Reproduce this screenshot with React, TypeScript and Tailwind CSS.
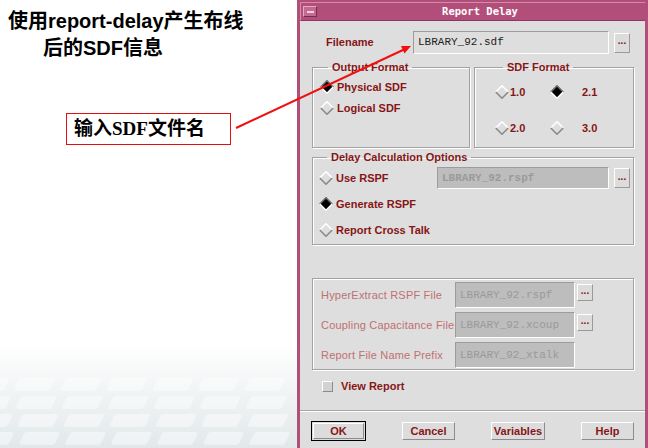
const RED = "text-[#861616]";
const DIM = "text-[#c07070]";

function Radio({ on }: { on?: boolean }) {
  return (
    <svg width="14" height="14" viewBox="0 0 14 14" className="shrink-0">
      <polygon points="7,0.5 13.5,7 7,13.5 0.5,7" fill={on ? "#000000" : "#dedede"} />
      <polyline points="0.8,7 7,0.8 13.2,7" fill="none" stroke={on ? "#707070" : "#ffffff"} strokeWidth="1.6" />
      <polyline points="0.8,7 7,13.2 13.2,7" fill="none" stroke={on ? "#ffffff" : "#8a8a8a"} strokeWidth="1.6" />
    </svg>
  );
}

function Dots({ h = "h-[20px]" }: { h?: string }) {
  return (
    <div
      className={`w-[16px] ${h} shrink-0 flex items-center justify-center bg-[#dcdcdc] border border-t-white border-l-white border-r-[#9a9a9a] border-b-[#9a9a9a] text-[10px] font-bold leading-none ${RED}`}
    >
      <span className="-mt-[3px]">...</span>
    </div>
  );
}

function Field({ text, disabled, w, h }: { text: string; disabled?: boolean; w: string; h: string }) {
  return (
    <div
      className={`${w} ${h} shrink-0 flex items-center pl-[4px] border border-t-[#9c9c9c] border-l-[#9c9c9c] border-r-white border-b-white font-['Liberation_Mono',monospace] text-[11px] ${
        disabled ? "bg-[#bdbdbd] text-[#9a9a9a]" : "bg-[#dedede] text-[#222222]"
      }`}
    >
      {text}
    </div>
  );
}

function Btn({ label, w, main }: { label: string; w: string; main?: boolean }) {
  const inner = (
    <div
      className={`h-full flex items-center justify-center bg-[#dcdcdc] border border-t-white border-l-white border-r-[#8c8c8c] border-b-[#8c8c8c] text-[11px] font-bold ${RED}`}
    >
      {label}
    </div>
  );
  return main ? (
    <div className={`${w} h-[20px] border border-black p-[1px] bg-[#dcdcdc]`}>{inner}</div>
  ) : (
    <div className={`${w} h-[18px] mt-[1px]`}>{inner}</div>
  );
}

const groupCls = "border border-[#a2a2a2] shadow-[inset_1px_1px_0_#ffffff,1px_1px_0_#ffffff]";
const legendCls = "ml-[8px] px-[4px] text-[11px] font-bold leading-[13px]";

export default function App() {
  return (
    <div className="relative w-[648px] h-[448px] overflow-hidden bg-white flex">
      {/* slide side */}
      <div className="w-[297px] h-full flex flex-col font-['Liberation_Sans','Noto_Sans_CJK_SC',sans-serif]">
        <div className="pt-[8px] text-[20px] font-bold leading-[27px] text-black">
          <div className="pl-[8px]">使用report-delay产生布线</div>
          <div className="pl-[43px]">后的SDF信息</div>
        </div>
        <div className="ml-[66px] mt-[51px] w-[165px] h-[32px] border border-[#e01010] flex items-center pl-[7px] text-[19px] font-bold text-black font-['Liberation_Serif','Noto_Sans_CJK_SC',serif]">
          输入SDF文件名
        </div>
        <div className="flex-1" />
        <div className="h-[105px] bg-gradient-to-b from-white via-[#f0f3f4] to-[#e2e8ea]">
          <svg width="297" height="105" viewBox="0 0 297 105">
            <g fill="#ffffff" opacity="0.45">
              {[0, 1, 2, 3].map((r) =>
                [0, 1, 2, 3, 4, 5, 6].map((c) => (
                  <rect
                    key={`${r}-${c}`}
                    x={c * 46 + r * 10 - 10}
                    y={35 + r * 18}
                    width="36"
                    height="13"
                    rx="3"
                    transform="skewX(-25)"
                  />
                ))
              )}
            </g>
          </svg>
        </div>
      </div>

      {/* dialog window */}
      <div className="w-[351px] h-full bg-[#b24e7a] pt-[2px] px-[3px] flex flex-col font-['Liberation_Sans',sans-serif]">
        <div className="h-[19px] flex items-center border-t border-l border-[#d68aac] border-b border-b-[#8e3560]">
          <div className="ml-[2px] w-[14px] h-[11px] bg-[#c46a92] border border-t-[#e6a8c4] border-l-[#e6a8c4] border-r-[#7a2a50] border-b-[#7a2a50] flex items-center justify-center">
            <div className="w-[7px] h-[2px] bg-[#f2d2e0]" />
          </div>
          <div className="flex-1 text-center pr-[2px] text-white font-bold text-[10.5px] font-['DejaVu_Sans_Mono',monospace]">
            Report Delay
          </div>
        </div>

        <div className={`flex-1 bg-[#dedede] pt-[10px] pl-[12px] pr-[11px] flex flex-col ${RED}`}>
          {/* filename */}
          <div className="h-[23px] flex items-center">
            <div className="w-[101px] pl-[14px] text-[11px] font-bold">Filename</div>
            <Field text="LBRARY_92.sdf" w="w-[196px]" h="h-[23px]" />
            <div className="ml-[5px]">
              <Dots />
            </div>
          </div>

          {/* formats */}
          <div className="mt-[7px] flex gap-[4px]">
            <fieldset className={`${groupCls} w-[158px] h-[87px] pl-[7px]`}>
              <legend className={legendCls}>Output Format</legend>
              <div className="mt-[5px] flex flex-col gap-[5px] text-[11px] font-bold">
                <div className="h-[16px] flex items-center gap-[3px]">
                  <Radio on />
                  Physical SDF
                </div>
                <div className="h-[16px] flex items-center gap-[3px]">
                  <Radio />
                  Logical SDF
                </div>
              </div>
            </fieldset>
            <fieldset className={`${groupCls} flex-1 h-[87px] pl-[20px]`}>
              <legend className={legendCls}>SDF Format</legend>
              <div className="mt-[10px] grid grid-cols-[55px_80px] gap-y-[20px] text-[11px] font-bold">
                <div className="h-[16px] flex items-center gap-[1px]">
                  <Radio />
                  1.0
                </div>
                <div className="h-[16px] flex items-center gap-[18px]">
                  <Radio on />
                  2.1
                </div>
                <div className="h-[16px] flex items-center gap-[1px]">
                  <Radio />
                  2.0
                </div>
                <div className="h-[16px] flex items-center gap-[18px]">
                  <Radio />
                  3.0
                </div>
              </div>
            </fieldset>
          </div>

          {/* delay calculation */}
          <fieldset className={`${groupCls} mt-[3px] h-[94px] pl-[6px] pr-[3px]`}>
            <legend className={legendCls}>Delay Calculation Options</legend>
            <div className="mt-[3px] flex flex-col gap-[4px] text-[11px] font-bold">
              <div className="h-[22px] flex items-center gap-[3px]">
                <Radio />
                Use RSPF
                <div className="ml-auto flex items-center gap-[5px]">
                  <Field text="LBRARY_92.rspf" disabled w="w-[172px]" h="h-[22px]" />
                  <Dots />
                </div>
              </div>
              <div className="h-[22px] flex items-center gap-[3px]">
                <Radio on />
                Generate RSPF
              </div>
              <div className="h-[22px] flex items-center gap-[3px]">
                <Radio />
                Report Cross Talk
              </div>
            </div>
          </fieldset>

          {/* disabled file fields */}
          <div className={`${groupCls} mt-[33px] h-[92px] pt-[3px] pl-[8px] flex flex-col gap-[4px] text-[11px] ${DIM}`}>
            {[
              ["HyperExtract RSPF File", "LBRARY_92.rspf", true],
              ["Coupling Capacitance File", "LBRARY_92.xcoup", true],
              ["Report File Name Prefix", "LBRARY_92_xtalk", false],
            ].map(([label, val, dots]) => (
              <div key={label as string} className="h-[26px] flex items-center">
                <div className="w-[134px] whitespace-nowrap tracking-[0.2px]">{label as string}</div>
                <Field text={val as string} disabled w="w-[120px]" h="h-[26px]" />
                {dots ? (
                  <div className="ml-[2px] self-start mt-[2px]">
                    <Dots h="h-[17px]" />
                  </div>
                ) : null}
              </div>
            ))}
          </div>

          {/* view report */}
          <div className="mt-[10px] h-[12px] pl-[10px] flex items-center gap-[8px] text-[11px] font-bold">
            <div className="w-[11px] h-[11px] bg-[#d2d2d2] border border-t-white border-l-white border-r-[#8c8c8c] border-b-[#8c8c8c]" />
            View Report
          </div>

          {/* separator */}
          <div className="mt-[18px] -ml-[12px] -mr-[11px] h-[2px] border-t border-t-[#a6a6a6] border-b border-b-white" />

          {/* buttons */}
          <div className="mt-[9px] -ml-[1px] flex justify-between">
            <Btn label="OK" w="w-[55px]" main />
            <Btn label="Cancel" w="w-[53px]" />
            <Btn label="Variables" w="w-[54px]" />
            <Btn label="Help" w="w-[53px]" />
          </div>
        </div>
      </div>

      {/* annotation arrow */}
      <svg className="absolute inset-0 pointer-events-none" width="648" height="448" viewBox="0 0 648 448">
        <line x1="236" y1="128" x2="404" y2="49.5" stroke="#f01010" strokeWidth="2" />
        <polygon points="411,46 404.5,53.6 401,46" fill="#f01010" />
      </svg>
    </div>
  );
}
